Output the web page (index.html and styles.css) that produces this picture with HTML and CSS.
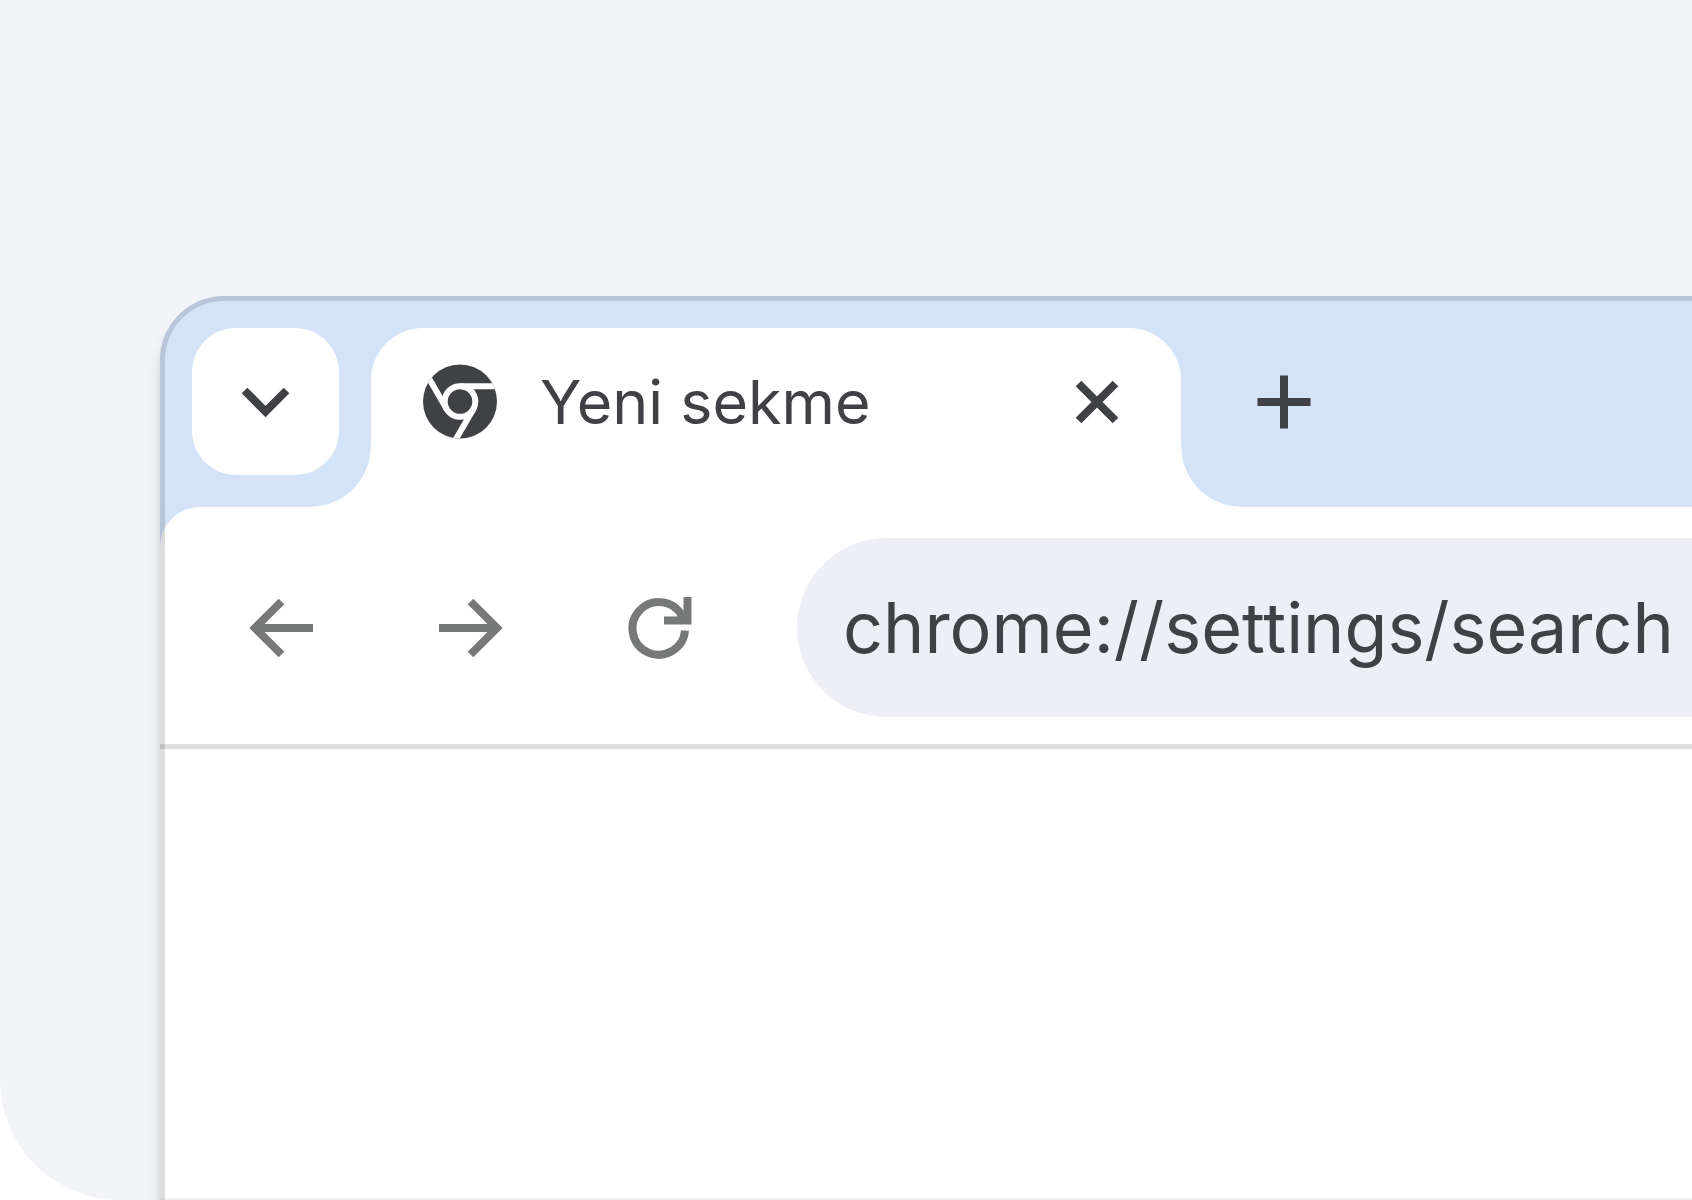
FILE: index.html
```html
<!DOCTYPE html>
<html lang="tr">
<head>
  <meta charset="UTF-8">
  <title>Yeni sekme</title>
  <link rel="stylesheet" href="styles.css">
</head>
<body>
  <main class="stage">
    <div class="browser">
      <div class="tab-strip">
        <button type="button" class="tab-search" aria-label="Sekmelerde ara">
          <svg width="48" height="32" viewBox="0 0 48 32"><path d="M2.500 4.500 23.500 25.500 44.500 4.500" /></svg>
        </button>

        <div class="tab">
          <svg class="favicon" width="74" height="74" viewBox="-37 -36.500 74 74">
            <defs>
              <clipPath id="disc"><circle r="37" /></clipPath>
            </defs>
            <circle class="disc" r="37" />
            <g class="blades" clip-path="url(#disc)">
              <circle r="15.300" />
              <path d="M0-15.300H40" />
              <path d="M0-15.300H40" transform="rotate(120)" />
              <path d="M0-15.300H40" transform="rotate(240)" />
            </g>
          </svg>
          <span class="tab-title">Yeni sekme</span>
          <button type="button" class="tab-close" aria-label="Kapat">
            <svg width="44" height="44" viewBox="-22 -22 44 44"><path d="M-18.500-18.500 18.500 18.500M18.500-18.500-18.500 18.500" /></svg>
          </button>
        </div>

        <button type="button" class="new-tab" aria-label="Yeni sekme">
          <svg width="54" height="54" viewBox="-27 -27 54 54"><path d="M0-26.500V26.500M-26.500 0H26.500" /></svg>
        </button>
      </div>

      <div class="toolbar">
        <nav class="nav">
          <button type="button" aria-label="Geri">
            <svg width="64" height="64" viewBox="0 0 64 64"><path d="M64 32H6M32.500 5.500 6 32 32.500 58.500" /></svg>
          </button>
          <button type="button" aria-label="İleri">
            <svg width="64" height="64" viewBox="0 0 64 64"><path d="M0 32H58M31.500 5.500 58 32 31.500 58.500" /></svg>
          </button>
          <button type="button" aria-label="Yenile">
            <svg width="64" height="64" viewBox="0 0 64 64"><path d="M56 34.500A26.300 26.300 0 1 1 53.500 21M58.500 1V24.500H35" /></svg>
          </button>
        </nav>
        <input class="omnibox" type="text" value="chrome://settings/search" aria-label="Adres çubuğu" spellcheck="false">
      </div>

      <div class="page"></div>
    </div>
  </main>
</body>
</html>
```

FILE: styles.css
```css
* {
  box-sizing: border-box;
}

body {
  margin: 0;
  background: #fff;
  color: #3f4144;
  font-family: Inter, "Liberation Sans", sans-serif;
}

button {
  display: flex;
  align-items: center;
  justify-content: center;
  flex: none;
  padding: 0;
  border: none;
  background: none;
  color: inherit;
  cursor: pointer;
}

svg {
  display: block;
  flex: none;
  overflow: visible;
  fill: none;
  stroke: currentColor;
  stroke-width: 8;
}

.stage {
  display: flex;
  min-height: 100vh;
  padding: 296px 0 0 160px;
  background: #f2f4f8;
  border-bottom-left-radius: 120px;
  overflow: hidden;
}

.browser {
  position: relative;
  display: flex;
  flex-direction: column;
  flex: 1;
  min-width: 0;
  background: #d5e3f9;
  border-top-left-radius: 64px;
  box-shadow: 0 12px 12px rgba(0, 0, 0, 0.16);
}

/* translucent outline over the strip and the page */
.browser::after {
  content: "";
  position: absolute;
  inset: 0;
  border: solid rgba(0, 0, 0, 0.13);
  border-width: 5px 0 0 5px;
  border-top-left-radius: 64px;
  pointer-events: none;
}

.tab-strip {
  display: flex;
  align-items: flex-start;
  padding: 32px 32px 0;
}

.tab-search {
  width: 147px;
  height: 147px;
  margin-right: 32px;
  background: #fff;
  border-radius: 44px;
}

.tab {
  position: relative;
  display: flex;
  align-items: center;
  flex: 0 1 810px;
  height: 179px;
  padding: 0 62px 32px 52px;
  background: #fff;
  border-radius: 52px 52px 0 0;
}

/* flared feet of the active tab */
.tab::before,
.tab::after {
  content: "";
  position: absolute;
  bottom: 0;
  width: 60px;
  height: 60px;
}

.tab::before {
  right: 100%;
  background: radial-gradient(circle at 0 0, transparent 59px, #fff 60px);
}

.tab::after {
  left: 100%;
  background: radial-gradient(circle at 100% 0, transparent 59px, #fff 60px);
}

.favicon {
  margin-right: 43px;
}

.disc {
  fill: currentColor;
  stroke: none;
}

.blades {
  stroke: #fff;
  stroke-width: 6;
}

.tab-title {
  flex: 1;
  font-size: 61px;
  white-space: nowrap;
}

.new-tab {
  height: 147px;
  margin-left: 76px;
}

.toolbar {
  display: flex;
  align-items: center;
  padding: 31px 0 27px 89px;
  background: #fff;
  border-bottom: 5px solid #dfdfe0;
  border-top-left-radius: 40px;
}

.nav {
  display: flex;
  gap: 126px;
  margin-right: 104px;
  color: #777978;
}

.omnibox {
  flex: 1;
  min-width: 0;
  height: 179px;
  padding: 0 0 0 46px;
  border: none;
  border-radius: 90px 0 0 90px;
  background: #edeff5;
  color: inherit;
  font-family: inherit;
  font-size: 70px;
  outline: none;
}

.page {
  flex: 1;
  background: #fff;
  border-bottom: 2px solid #f1f1f1;
}
```
